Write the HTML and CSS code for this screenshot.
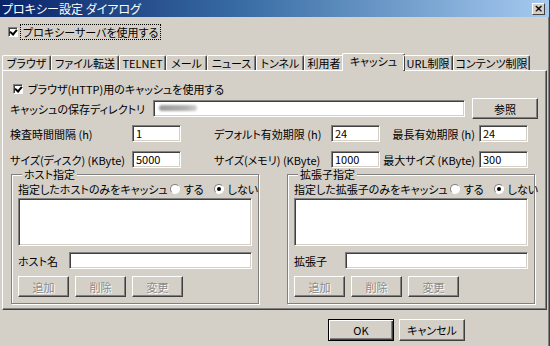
FILE: index.html
```html
<!DOCTYPE html>
<html lang="ja">
    <head>
        <meta charset="UTF-8">
        <title>プロキシー設定 ダイアログ</title>
        <link rel="stylesheet" href="styles.css">
    </head>

    <body>
        <div class="window">
            <div class="titlebar">
                <span class="title">プロキシー設定 ダイアログ</span>
                <span class="close">×</span>
            </div>

            <div class="body">
                <div class="proxy_row">
                    <span class="check checked"></span>
                    <span class="focus_label">プロキシーサーバを使用する</span>
                </div>

                <div class="tabs">
                    <div class="tab">ブラウザ</div>
                    <div class="tab">ファイル転送</div>
                    <div class="tab">TELNET</div>
                    <div class="tab">メール</div>
                    <div class="tab">ニュース</div>
                    <div class="tab">トンネル</div>
                    <div class="tab">利用者</div>
                    <div class="tab selected">キャッシュ</div>
                    <div class="tab">URL制限</div>
                    <div class="tab">コンテンツ制限</div>
                </div>

                <div class="panel">
                    <div class="cache_row">
                        <span class="check checked"></span>
                        <span>ブラウザ(HTTP)用のキャッシュを使用する</span>
                    </div>

                    <div class="dir_row">
                        <span class="dir_label">キャッシュの保存ディレクトリ</span>
                        <div class="field dir_field"><span class="smudge"></span></div>
                        <button class="btn browse">参照</button>
                    </div>

                    <div class="num_row">
                        <span class="lbl col1">検査時間間隔 (h)</span>
                        <div class="field num">1</div>
                        <span class="lbl col2">デフォルト有効期限 (h)</span>
                        <div class="field num">24</div>
                        <span class="lbl col3">最長有効期限 (h)</span>
                        <div class="field num">24</div>
                    </div>

                    <div class="num_row second">
                        <span class="lbl col1">サイズ(ディスク) (KByte)</span>
                        <div class="field num">5000</div>
                        <span class="lbl col2">サイズ(メモリ) (KByte)</span>
                        <div class="field num">1000</div>
                        <span class="lbl col3">最大サイズ (KByte)</span>
                        <div class="field num">300</div>
                    </div>

                    <div class="groups">
                        <fieldset class="group">
                            <legend>ホスト指定</legend>
                            <div class="radio_row">
                                <span>指定したホストのみをキャッシュ</span>
                                <span class="radio"></span><span>する</span>
                                <span class="radio on"></span><span>しない</span>
                            </div>
                            <div class="listbox"></div>
                            <div class="name_row">
                                <span class="name_label">ホスト名</span>
                                <div class="field name_field"></div>
                            </div>
                            <div class="btn_row">
                                <button class="btn small" disabled>追加</button>
                                <button class="btn small" disabled>削除</button>
                                <button class="btn small" disabled>変更</button>
                            </div>
                        </fieldset>

                        <fieldset class="group">
                            <legend>拡張子指定</legend>
                            <div class="radio_row">
                                <span>指定した拡張子のみをキャッシュ</span>
                                <span class="radio"></span><span>する</span>
                                <span class="radio on"></span><span>しない</span>
                            </div>
                            <div class="listbox"></div>
                            <div class="name_row">
                                <span class="name_label">拡張子</span>
                                <div class="field name_field"></div>
                            </div>
                            <div class="btn_row">
                                <button class="btn small" disabled>追加</button>
                                <button class="btn small" disabled>削除</button>
                                <button class="btn small" disabled>変更</button>
                            </div>
                        </fieldset>
                    </div>
                </div>

                <div class="footer">
                    <button class="btn wide default">OK</button>
                    <button class="btn wide">キャンセル</button>
                </div>
            </div>
        </div>
    </body>
</html>
```

FILE: styles.css
```css
*{
    box-sizing: border-box;
}
body{
    margin: 0;
    width: 550px;
    height: 346px;
    overflow: hidden;
    background-color: #d4d0c8;
    font-family: "Noto Sans CJK JP", "Noto Sans", sans-serif;
    font-feature-settings: "palt";
    font-size: 11px;
    color: #000;
}
.window{
    display: flex;
    flex-direction: column;
    width: 550px;
    height: 346px;
    border-right: 1px solid #404040;
    box-shadow: inset -1px 0 0 #808080;
}
.titlebar{
    display: flex;
    justify-content: space-between;
    align-items: center;
    height: 17px;
    padding: 0 4px 0 2px;
    background: linear-gradient(to right, #0a246a, #3a6ea5 45%, #a6caf0);
    color: #fff;
}
.title{
    font-size: 12px;
    line-height: 17px;
}
.close{
    width: 13px;
    height: 12px;
    background-color: #d4d0c8;
    border: 1px solid;
    border-color: #fff #404040 #404040 #fff;
    color: #000;
    font-family: "DejaVu Sans", sans-serif;
    font-weight: bold;
    font-size: 11px;
    line-height: 10px;
    text-align: center;
}
.body{
    display: flex;
    flex-direction: column;
    padding: 0 2px 0 2px;
}

/* checkbox + radio */
.check{
    display: inline-block;
    flex: none;
    width: 10px;
    height: 10px;
    background-color: #fff;
    border: 1px solid;
    border-color: #808080 #fff #fff #808080;
    box-shadow: inset 1px 1px 0 #404040;
    position: relative;
}
.check.checked::after{
    content: "";
    position: absolute;
    left: 1px;
    top: 0px;
    width: 3px;
    height: 5px;
    border: solid #000;
    border-width: 0 2px 2px 0;
    transform: translate(1px, 0) rotate(40deg);
}
.radio{
    display: inline-block;
    flex: none;
    width: 10px;
    height: 10px;
    border-radius: 50%;
    background-color: #fff;
    border: 1px solid;
    border-color: #808080 #fff #fff #808080;
    margin: 0 4px 0 2px;
    position: relative;
}
.radio.on{
    margin-left: 10px;
}
.radio.on::after{
    content: "";
    position: absolute;
    left: 2px;
    top: 2px;
    width: 4px;
    height: 4px;
    border-radius: 50%;
    background-color: #000;
}

.proxy_row{
    display: flex;
    align-items: center;
    margin: 8px 0 0 6px;
    height: 13px;
    gap: 4px;
}
.focus_label{
    outline: 1px dotted #000;
    outline-offset: 1px;
    padding: 0 1px;
    line-height: 12px;
}

/* tabs */
.tabs{
    display: flex;
    align-items: flex-end;
    height: 17px;
    margin-top: 15px;
    position: relative;
    z-index: 1;
}
.tab{
    height: 15px;
    line-height: 14px;
    text-align: center;
    white-space: nowrap;
    border: 1px solid;
    border-bottom: none;
    border-color: #fff #404040 #fff #fff;
    border-radius: 2px 2px 0 0;
    box-shadow: inset -1px 0 0 #808080;
}
.tab:nth-child(1){ width: 49px; }
.tab:nth-child(2){ width: 68px; }
.tab:nth-child(3){ width: 47px; }
.tab:nth-child(4){ width: 41px; }
.tab:nth-child(5){ width: 49px; }
.tab:nth-child(6){ width: 48px; }
.tab:nth-child(7){ width: 40px; }
.tab:nth-child(8){ width: 63px; }
.tab:nth-child(9){ width: 50px; }
.tab:nth-child(10){ width: 77px; }
.tab.selected{
    height: 18px;
    margin: 0 -2px -1px -2px;
    background-color: #d4d0c8;
    line-height: 15px;
}

.panel{
    display: flex;
    flex-direction: column;
    height: 240px;
    width: 545px;
    padding: 0 7px 3px 7px;
    border: 1px solid;
    border-color: #fff #404040 #404040 #fff;
    box-shadow: inset -1px -1px 0 #808080;
}
.cache_row{
    display: flex;
    align-items: center;
    gap: 5px;
    height: 12px;
    margin: 12px 0 0 3px;
}

/* sunken fields */
.field{
    background-color: #fff;
    border: 1px solid;
    border-color: #808080 #fff #fff #808080;
    box-shadow: inset 1px 1px 0 #404040, inset -1px -1px 0 #d4d0c8;
    height: 17px;
    padding-left: 3px;
    line-height: 15px;
}
.dir_row{
    display: flex;
    align-items: center;
    height: 21px;
    margin-top: 3px;
}
.dir_label{
    width: 143px;
    white-space: nowrap;
}
.dir_field{
    width: 312px;
    padding-top: 3px;
    padding-left: 5px;
}
.smudge{
    display: block;
    width: 38px;
    height: 6px;
    margin-top: 1px;
    background: linear-gradient(to right, #9a9a9a, #b0b0b0 70%, #d0d0d0);
    border-radius: 3px;
    filter: blur(1.2px);
}
.num_row{
    display: flex;
    align-items: center;
    margin-top: 6px;
}
.num_row.second{
    margin-top: 9px;
}
.lbl{
    white-space: nowrap;
}
.col1{ width: 122px; }
.col2{ width: 117px; margin-left: 33px; }
.col3{ width: 99px; text-align: right; padding-right: 4px; }
.num{
    width: 49px;
}

/* buttons */
.btn{
    font: inherit;
    color: #000;
    background-color: #d4d0c8;
    border: 1px solid;
    border-color: #fff #404040 #404040 #fff;
    box-shadow: inset -1px -1px 0 #808080;
    border-radius: 0;
    padding: 0;
}
.btn:disabled{
    color: #8a8a8a;
    text-shadow: 1px 1px 0 #fff;
}
.browse{
    width: 66px;
    height: 21px;
    margin-left: 7px;
}
.small{
    width: 51px;
    height: 21px;
}
.wide{
    width: 66px;
    height: 22px;
}
.default{
    border-color: #000;
    box-shadow: inset 1px 1px 0 #fff, inset -1px -1px 0 #404040, inset -2px -2px 0 #808080;
}

/* group boxes */
.groups{
    display: flex;
    justify-content: space-between;
    margin: 1px 4px 0 1px;
}
.group{
    width: 248px;
    height: 135px;
    margin: 0;
    min-width: 0;
    padding: 0 6px 6px 6px;
    border: 1px solid #808080;
    box-shadow: 1px 1px 0 #fff, inset 1px 1px 0 #fff;
    display: flex;
    flex-direction: column;
}
.group legend{
    padding: 0 2px;
    margin-left: 4px;
    line-height: 11px;
    background-color: #d4d0c8;
}
.radio_row{
    display: flex;
    align-items: center;
    height: 12px;
    margin-top: 3px;
    white-space: nowrap;
}
.listbox{
    height: 50px;
    margin-top: 3px;
    background-color: #fff;
    border: 1px solid;
    border-color: #808080 #fff #fff #808080;
    box-shadow: inset 1px 1px 0 #404040, inset -1px -1px 0 #d4d0c8;
}
.name_row{
    display: flex;
    align-items: center;
    margin-top: 6px;
}
.name_label{
    width: 51px;
}
.name_field{
    flex: 1;
}
.btn_row{
    display: flex;
    gap: 6px;
    margin-top: 7px;
}

.footer{
    display: flex;
    justify-content: flex-end;
    gap: 5px;
    margin-top: 9px;
    padding-right: 82px;
}
```
